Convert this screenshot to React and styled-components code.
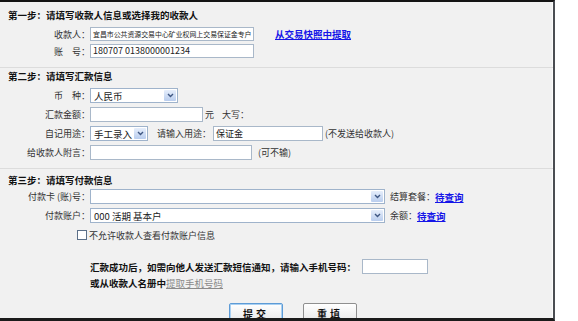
import styled, { createGlobalStyle } from "styled-components";

const GlobalStyle = createGlobalStyle`
  body {
    margin: 0;
    background: #ffffff;
    font-family: "Noto Sans CJK SC", "Liberation Sans", sans-serif;
  }
`;

const Panel = styled.div`
  width: 555px;
  height: 321px;
  box-sizing: border-box;
  background: #f1f1f1;
  border-top: 2px solid #141414;
  border-right: 2px solid #4a4d52;
  border-bottom: 3px solid #1b1b1b;
  box-shadow: inset -1px 0 0 #fbfbfb;
  overflow: hidden;
  display: flex;
  flex-direction: column;
  color: #222;
`;

const Section = styled.div`
  padding: ${(p) => p.$pad};
  border-bottom: ${(p) => (p.$last ? "none" : "1px solid #dcdcdc")};
  display: flex;
  flex-direction: column;
`;

const Title = styled.div`
  height: 12px;
  line-height: 12px;
  padding-left: 8px;
  font-size: 9.5px;
  font-weight: 700;
  color: #111;
  margin-bottom: ${(p) => p.$gap || 6}px;
`;

const Rows = styled.div`
  display: flex;
  flex-direction: column;
  gap: ${(p) => p.$gap || 4}px;
`;

const Row = styled.div`
  display: flex;
  align-items: center;
  height: ${(p) => p.$h || 15}px;
  font-size: 9px;
  white-space: nowrap;
`;

const Label = styled.span`
  width: 90px;
  text-align: right;
  font-size: 9px;
  color: #333;
`;

const Input = styled.div`
  width: ${(p) => p.$w}px;
  height: ${(p) => p.$h || 15}px;
  box-sizing: border-box;
  background: #fff;
  border: 1px solid #a9b8c9;
  font-size: ${(p) => p.$fs || 9}px;
  line-height: ${(p) => (p.$h || 15) - 2}px;
  padding-left: 2px;
  overflow: hidden;
  white-space: nowrap;
  color: #222;
  margin-left: ${(p) => p.$ml || 0}px;
  margin-right: ${(p) => p.$mr || 0}px;
`;

const Select = styled.div`
  width: ${(p) => p.$w}px;
  height: 15px;
  box-sizing: border-box;
  background: #fff;
  border: 1px solid #9fb3cb;
  display: flex;
  align-items: center;
  justify-content: space-between;
  font-size: 9.5px;
  padding-left: 3px;
  margin-right: ${(p) => p.$mr || 0}px;
  color: #222;
`;

const Arrow = styled.span`
  width: 12px;
  height: 11px;
  margin-right: 1px;
  border-radius: 1px;
  background: linear-gradient(#e6eefb, #b9cdee);
  display: flex;
  align-items: center;
  justify-content: center;
`;

const Text = styled.span`
  font-size: 9px;
  color: #333;
  margin-left: ${(p) => p.$ml || 0}px;
  margin-right: ${(p) => p.$mr || 0}px;
`;

const Link = styled.a`
  font-size: 9.5px;
  color: ${(p) => (p.$muted ? "#8a8a8a" : "#1515e8")};
  text-decoration: underline;
  margin-left: ${(p) => p.$ml || 0}px;
  font-weight: ${(p) => (p.$muted ? 400 : 700)};
`;

const CheckRow = styled.div`
  display: flex;
  align-items: center;
  height: 12px;
  margin-top: 6px;
  padding-left: 77px;
  font-size: 9px;
  color: #333;
`;

const Box = styled.span`
  width: 10px;
  height: 10px;
  box-sizing: border-box;
  border: 1px solid #5b6f88;
  background: #fff;
  margin-right: 2px;
`;

const Notice = styled.div`
  padding-left: 90px;
  margin-top: 18px;
  display: flex;
  flex-direction: column;
  gap: 1px;
  font-size: 9.5px;
  font-weight: 700;
  color: #111;
`;

const NoticeLine = styled.div`
  display: flex;
  align-items: center;
  height: 15px;
  white-space: nowrap;
`;

const Buttons = styled.div`
  display: flex;
  gap: 20px;
  padding-left: 229px;
  margin-top: 13px;
`;

const Button = styled.button`
  width: 54px;
  height: 21px;
  font-family: inherit;
  font-size: 10px;
  font-weight: 700;
  letter-spacing: 3px;
  color: #111;
  border-radius: 2px;
  border: 1px solid ${(p) => (p.$primary ? "#5d9bd6" : "#8f8f8f")};
  box-shadow: ${(p) => (p.$primary ? "inset 0 0 0 1px #a9d0f2" : "none")};
  background: linear-gradient(#ffffff, #e6e6e6);
  padding: 0;
`;

const Chevron = () => (
  <svg width="7" height="5" viewBox="0 0 7 5">
    <path d="M1 1 L3.5 3.5 L6 1" fill="none" stroke="#3f5782" strokeWidth="1.4" />
  </svg>
);

const FakeSelect = ({ w, mr, children }) => (
  <Select $w={w} $mr={mr}>
    <span>{children}</span>
    <Arrow>
      <Chevron />
    </Arrow>
  </Select>
);

const App = () => {
  return (
    <>
      <GlobalStyle />
      <Panel>
        <Section $pad="7px 0 9px">
          <Title>第一步：请填写收款人信息或选择我的收款人</Title>
          <Rows $gap={3}>
            <Row $h={14}>
              <Label>收款人：</Label>
              <Input $w={164} $h={14} $fs={6.9} $mr={21}>
                宜昌市公共资源交易中心矿业权网上交易保证金专户
              </Input>
              <Link>从交易快照中提取</Link>
            </Row>
            <Row $h={14}>
              <Label>账　号：</Label>
              <Input $w={164} $h={14} $fs={9}>
                180707 0138000001234
              </Input>
            </Row>
          </Rows>
        </Section>

        <Section $pad="2px 0 8px">
          <Title>第二步：请填写汇款信息</Title>
          <Rows>
            <Row>
              <Label>币　种：</Label>
              <FakeSelect w={88}>人民币</FakeSelect>
            </Row>
            <Row>
              <Label>汇款金额：</Label>
              <Input $w={113} $mr={2} />
              <Text $mr={8}>元</Text>
              <Text>大写：</Text>
            </Row>
            <Row>
              <Label>自记用途：</Label>
              <FakeSelect w={58} mr={9}>
                手工录入
              </FakeSelect>
              <Text $mr={2}>请输入用途：</Text>
              <Input $w={110} $mr={2}>
                保证金
              </Input>
              <Text>(不发送给收款人)</Text>
            </Row>
            <Row>
              <Label>给收款人附言：</Label>
              <Input $w={162} $mr={6} />
              <Text>(可不输)</Text>
            </Row>
          </Rows>
        </Section>

        <Section $pad="5px 0 0" $last>
          <Title $gap={3}>第三步：请填写付款信息</Title>
          <Rows>
            <Row>
              <Label>付款卡 (账)号：</Label>
              <FakeSelect w={295} mr={5} />
              <Text>结算套餐：</Text>
              <Link>待查询</Link>
            </Row>
            <Row>
              <Label>付款账户：</Label>
              <FakeSelect w={295} mr={5}>
                000 活期 基本户
              </FakeSelect>
              <Text>余额：</Text>
              <Link>待查询</Link>
            </Row>
          </Rows>
          <CheckRow>
            <Box />
            不允许收款人查看付款账户信息
          </CheckRow>
          <Notice>
            <NoticeLine>
              汇款成功后，如需向他人发送汇款短信通知，请输入手机号码：
              <Input $w={66} $h={15} $ml={6} />
            </NoticeLine>
            <NoticeLine>
              或从收款人名册中<Link $muted>提取手机号码</Link>
            </NoticeLine>
          </Notice>
          <Buttons>
            <Button $primary>提交</Button>
            <Button>重填</Button>
          </Buttons>
        </Section>
      </Panel>
    </>
  );
};

export default App;
